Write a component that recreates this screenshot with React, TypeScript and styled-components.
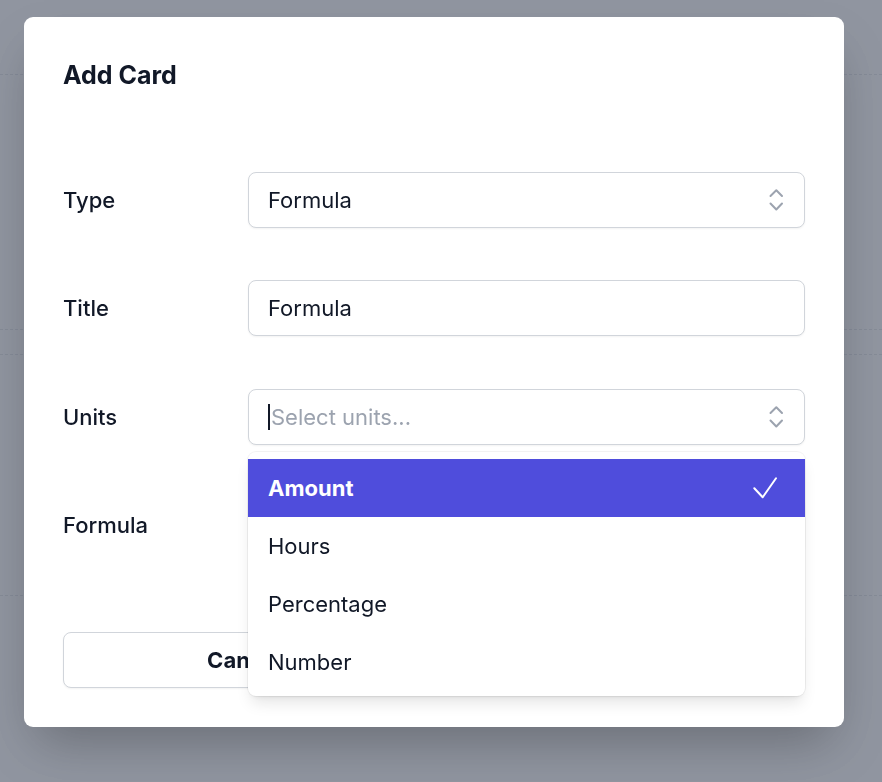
import styled, { createGlobalStyle } from 'styled-components';

const GlobalStyle = createGlobalStyle`
  html, body {
    margin: 0;
    padding: 0;
  }
  body {
    font-family: Inter, "Noto Sans", "Liberation Sans", sans-serif;
    color: #111827;
    -webkit-font-smoothing: antialiased;
  }
  * { box-sizing: border-box; }
`

// the page that sits behind the modal
const Page = styled.div`
  background: #fff;
  height: 782px;
  overflow: hidden;
`
const PageRow = styled.div<{ $h: number }>`
  height: ${p => p.$h}px;
  border-bottom: 1px dashed #d1d5db;
`

const Overlay = styled.div`
  position: fixed;
  inset: 0;
  background: rgba(107, 114, 128, 0.75);
  display: flex;
  align-items: flex-start;
  padding: 17px 24px;
`

const Modal = styled.div`
  width: 820px;
  background: #fff;
  border-radius: 9px;
  padding: 40px 39px 39px;
  box-shadow: 0 25px 50px -12px rgba(0, 0, 0, 0.28);
`

const Heading = styled.h3`
  margin: 0 0 78.5px;
  font-size: 25px;
  line-height: 36px;
  font-weight: 700;
`

const Form = styled.div`
  display: grid;
  row-gap: 52.5px;
`

const Row = styled.div`
  display: grid;
  grid-template-columns: 185px 1fr;
  align-items: center;
`

const Label = styled.label`
  font-size: 22px;
  font-weight: 500;
  line-height: 28px;
`

const Field = styled.div`
  position: relative;
`

const Box = styled.div`
  height: 56px;
  display: flex;
  align-items: center;
  justify-content: space-between;
  padding: 0 20px 0 19px;
  border: 1px solid #d1d5db;
  border-radius: 8px;
  background: #fff;
  box-shadow: 0 1px 2px rgba(0, 0, 0, 0.05);
  font-size: 22px;
  line-height: 28px;
`

const Placeholder = styled.span`
  color: #9ca3af;
  display: flex;
  align-items: center;
`

const Caret = styled.span`
  display: inline-block;
  width: 2px;
  height: 26px;
  background: #111827;
  margin-right: 1px;
`

const Menu = styled.div`
  position: absolute;
  left: 0;
  right: 0;
  top: calc(100% + 7px);
  background: #fff;
  border-radius: 8px;
  padding: 7px 0 5px;
  box-shadow: 0 10px 15px -3px rgba(0, 0, 0, 0.1), 0 4px 6px -4px rgba(0, 0, 0, 0.1),
    0 0 0 1px rgba(0, 0, 0, 0.05);
  z-index: 2;
`

const Option = styled.div<{ $active?: boolean }>`
  height: 58px;
  display: flex;
  align-items: center;
  justify-content: space-between;
  padding: 0 28px 0 20px;
  font-size: 22px;
  font-weight: ${p => (p.$active ? 700 : 400)};
  color: ${p => (p.$active ? '#fff' : '#111827')};
  background: ${p => (p.$active ? '#4f4ddc' : 'transparent')};
`

const Actions = styled.div`
  margin-top: 79px;
  display: grid;
  grid-template-columns: 1fr 1fr;
  gap: 16px;
`

const Button = styled.button<{ $primary?: boolean }>`
  height: 56px;
  border-radius: 8px;
  font-family: inherit;
  font-size: 22px;
  font-weight: 700;
  border: 1px solid ${p => (p.$primary ? 'transparent' : '#d1d5db')};
  background: ${p => (p.$primary ? '#4f46e5' : '#fff')};
  color: ${p => (p.$primary ? '#fff' : '#111827')};
  box-shadow: 0 1px 2px rgba(0, 0, 0, 0.05);
`

const UpDown = () => (
  <svg width="16" height="24" viewBox="0 0 16 24" fill="none" stroke="#9ca3af" strokeWidth="2" strokeLinecap="round" strokeLinejoin="round">
    <path d="M2.5 8L8.3 2.2L14 8" />
    <path d="M2.5 15.5L8.3 21.5L14 15.5" />
  </svg>
)

const Check = () => (
  <svg width="24" height="24" viewBox="0 0 24 24" fill="none" stroke="#fff" strokeWidth="2" strokeLinecap="round" strokeLinejoin="round">
    <path d="M1.3 12.3L9.7 21.3L23 2.3" />
  </svg>
)

const units = ['Amount', 'Hours', 'Percentage', 'Number']

export default function App() {
  return (
    <>
      <GlobalStyle />
      <Page>
        <PageRow $h={75} />
        <PageRow $h={255} />
        <PageRow $h={25} />
        <PageRow $h={241} />
      </Page>
      <Overlay>
        <Modal>
          <Heading>Add Card</Heading>
          <Form>
            <Row>
              <Label>Type</Label>
              <Box>
                <span>Formula</span>
                <UpDown />
              </Box>
            </Row>
            <Row>
              <Label>Title</Label>
              <Box>
                <span>Formula</span>
              </Box>
            </Row>
            <Row>
              <Label>Units</Label>
              <Field>
                <Box>
                  <Placeholder>
                    <Caret />
                    Select units...
                  </Placeholder>
                  <UpDown />
                </Box>
                <Menu>
                  {units.map((u, i) => (
                    <Option key={u} $active={i === 0}>
                      <span>{u}</span>
                      {i === 0 && <Check />}
                    </Option>
                  ))}
                </Menu>
              </Field>
            </Row>
            <Row>
              <Label>Formula</Label>
              <Box />
            </Row>
          </Form>
          <Actions>
            <Button>Cancel</Button>
            <Button $primary>Add</Button>
          </Actions>
        </Modal>
      </Overlay>
    </>
  )
}
